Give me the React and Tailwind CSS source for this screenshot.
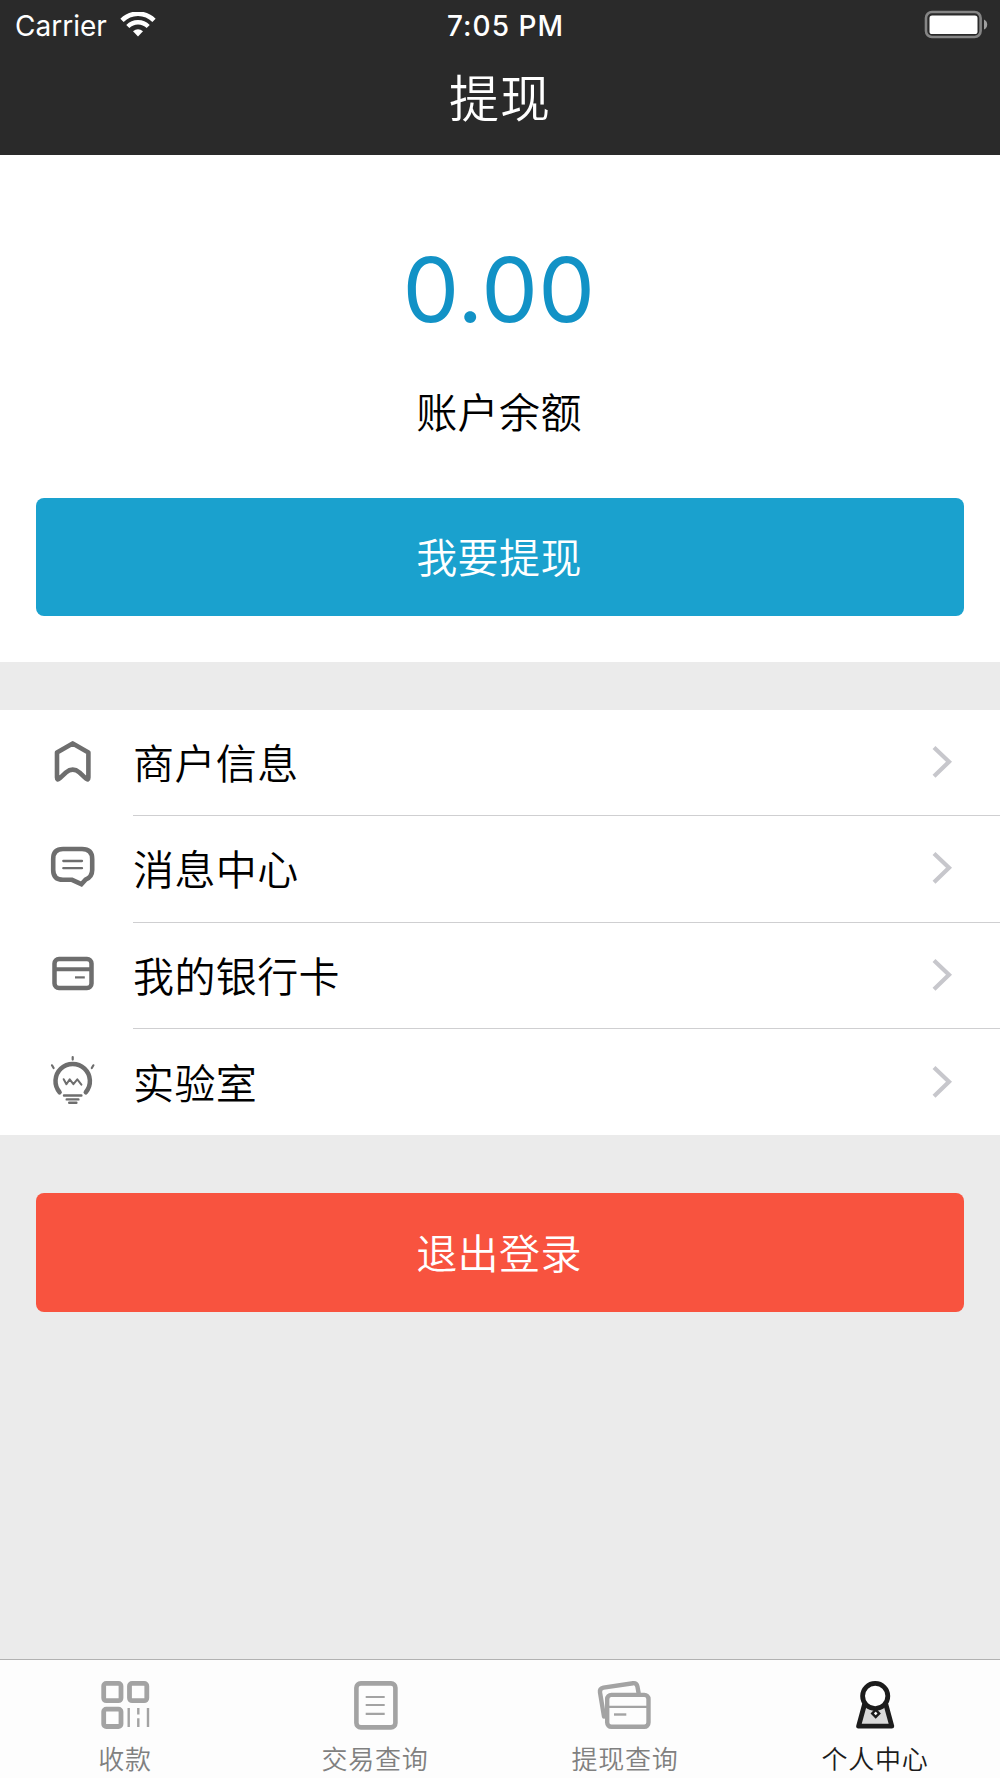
import React from "react";

function StatusBar() {
  return (
    <div className="grid h-[50px] grid-cols-3 items-center font-['Inter',sans-serif] text-[28px] leading-none text-white">
      <div className="flex items-center pl-[15px] pt-px">
        <span className="tracking-[0px]">Carrier</span>
        <svg className="ml-[13px] -mt-[1px]" width="36" height="26" viewBox="0 0 36 26" fill="none" stroke="#fff">
          <path d="M2 8.4A22.5 22.5 0 0 1 34 8.4" strokeWidth="4.6" />
          <path d="M7.8 14.5A14.5 14.5 0 0 1 28.2 14.5" strokeWidth="4.4" />
          <path d="M13 19.3Q18 15.4 23 19.3L18 24.4Z" fill="#fff" stroke="none" />
        </svg>
      </div>
      <div className="pl-[11px] pt-px text-center font-medium tracking-[1px]">7:05 PM</div>
      <div className="flex justify-end pr-[12px]">
        <svg className="-mt-px" width="64" height="30" viewBox="0 0 64 30">
          <rect x="2" y="2" width="54.6" height="25" rx="6" fill="none" stroke="#858585" strokeWidth="2.6" />
          <rect x="5.5" y="5.5" width="48" height="18.5" rx="2.6" fill="#fff" />
          <path d="M60 9.5Q63.2 11 63.2 14.5T60 19.5Z" fill="#a0a0a0" />
        </svg>
      </div>
    </div>
  );
}

function ShopIcon() {
  return (
    <svg width="56" height="56" viewBox="0 0 56 56" fill="none" stroke="#6e6e6e" strokeWidth="4.6">
      <path d="M27.7 8.4L43.4 17.4V42.5Q43.4 45.6 41 43.6L34.5 37.5Q27.7 31.8 20.9 37.5L14.4 43.6Q12 45.6 12 42.5V17.4Z" strokeLinejoin="round" />
    </svg>
  );
}

function MessageIcon() {
  return (
    <svg width="56" height="56" viewBox="0 0 56 56" fill="none" stroke="#6e6e6e" strokeWidth="4.6">
      <path d="M18 8H37Q47.2 8 47.2 18V29Q47.2 36 40.5 38.6L36.4 43.2L27 38.8H18Q8.2 38.8 8.2 29V18Q8.2 8 18 8Z" />
      <path d="M18.3 20H37M18.3 27.2H37" strokeWidth="2.3" strokeLinecap="round" />
    </svg>
  );
}

function CardIcon() {
  return (
    <svg width="56" height="56" viewBox="0 0 56 56" fill="none" stroke="#6e6e6e" strokeWidth="4.5">
      <rect x="9.5" y="11" width="37" height="29" rx="4.5" />
      <path d="M9.5 21.2H46.5" strokeWidth="4" />
      <path d="M30 29.4H39.8" strokeWidth="2.2" />
    </svg>
  );
}

function BulbIcon() {
  return (
    <svg width="56" height="56" viewBox="0 0 56 56" fill="none" stroke="#6e6e6e" strokeLinecap="round">
      <path d="M14.6 38.3A17.2 17.2 0 1 1 40.8 38.3" strokeWidth="4.5" />
      <path d="M19 41.5H36.4M21.7 45.4H33.4M24.2 48.8H31.4" strokeWidth="2.4" />
      <path d="M27.7 3V5.6M7 11.3L8.6 14M48.4 11.3L46.8 14" strokeWidth="2.2" />
      <path d="M18.7 25.2L21.4 30.2L24.7 25.4L28.4 30.2L32.3 25.4L36.4 30.6" strokeWidth="2" strokeLinejoin="round" />
    </svg>
  );
}

const rows = [
  { label: "商户信息", Icon: ShopIcon },
  { label: "消息中心", Icon: MessageIcon },
  { label: "我的银行卡", Icon: CardIcon },
  { label: "实验室", Icon: BulbIcon },
];

function Row({ label, Icon, last }) {
  return (
    <div className="flex h-[106.3px] pl-[45px]">
      <div className="w-[88px] pt-[25px]">
        <Icon />
      </div>
      <div className={"flex flex-1 items-center justify-between pr-[47px] " + (last ? "" : "border-b border-[#cfcfd1]")}>
        <span className="pb-[3px] text-[41px] font-[350] leading-[50px] tracking-[0.4px] text-black">{label}</span>
        <svg className="-mt-px" width="22" height="36" viewBox="0 0 22 36" fill="none" stroke="#c7c7cc" strokeWidth="4.2">
          <path d="M3 3.4L18 17.8L3 32.2" />
        </svg>
      </div>
    </div>
  );
}

function CollectIcon() {
  return (
    <svg width="60" height="60" viewBox="0 0 60 60" fill="none" stroke="#a3a3a3" strokeWidth="4.8">
      <rect x="8.7" y="7.4" width="17.3" height="17.3" rx="2.6" />
      <rect x="34.5" y="7.4" width="17.3" height="17.3" rx="2.6" />
      <rect x="8.7" y="33.2" width="17.3" height="17.3" rx="2.6" />
      <path d="M33.7 32V51M43.3 32V38.5M43.3 42.3V51M53 32V51" strokeWidth="2.4" />
    </svg>
  );
}

function OrdersIcon() {
  return (
    <svg width="60" height="60" viewBox="0 0 60 60" fill="none" stroke="#a3a3a3" strokeWidth="4.6">
      <rect x="11.4" y="7.4" width="39" height="44" rx="4.4" />
      <path d="M20.7 21H39.7M20.7 29H39.7M20.7 37.8H39.7" strokeWidth="2.2" />
    </svg>
  );
}

function WithdrawalsIcon() {
  return (
    <svg width="60" height="60" viewBox="0 0 60 60" fill="none" stroke="#a3a3a3" strokeWidth="4.4">
      <path d="M9 40.5L5 16.4Q4.4 12.4 8.4 11.6L38 7.2Q41.6 6.8 42.4 10.4L43.6 17" strokeLinecap="round" />
      <rect x="12.2" y="18.9" width="41.3" height="31.9" rx="4.2" />
      <path d="M12 30.9H53.4" strokeWidth="2.4" />
      <path d="M19 38.5H31.3" strokeWidth="2.4" />
    </svg>
  );
}

function ProfileIcon() {
  return (
    <svg width="60" height="60" viewBox="0 0 60 60" fill="none" stroke="#1c1c1c" strokeWidth="4.8">
      <path d="M19.5 28.5L13.6 50.2H46.8L40.9 28.5Z" fill="#d9d9d9" strokeLinejoin="round" />
      <circle cx="30.2" cy="20" r="12.6" fill="#fff" />
      <path d="M30.7 33.8L34.2 37.4L30.7 41L27.2 37.4Z" fill="#fff" strokeWidth="2.4" />
    </svg>
  );
}

const tabs = [
  { label: "收款", Icon: CollectIcon },
  { label: "交易查询", Icon: OrdersIcon },
  { label: "提现查询", Icon: WithdrawalsIcon },
  { label: "个人中心", Icon: ProfileIcon, active: true },
];

export default function App() {
  return (
    <div
      lang="zh-CN"
      className="flex h-[1778px] w-[1000px] flex-col overflow-hidden bg-[#ebebeb] font-['Noto_Sans_CJK_SC',sans-serif]"
    >
      <header className="h-[155px] bg-[#2a2a2a]">
        <StatusBar />
        <h1 className="pt-[9px] text-center text-[50px] font-[350] leading-[72px] tracking-[1px] text-white">提现</h1>
      </header>

      <section className="flex h-[507px] flex-col items-center bg-white px-9">
        <div className="mt-[85px] pr-[2px] font-['Inter',sans-serif] text-[90px] leading-[100px] tracking-[0.3px] text-[#1292c6]">
          0.00
        </div>
        <div className="mt-[40px] pr-[2px] text-[41px] font-[350] leading-[60px] tracking-[0.4px] text-black">
          账户余额
        </div>
        <button className="mt-[58px] h-[118px] w-full rounded-[8px] bg-[#1aa1ce] pr-[2px] pb-[3px] text-[41px] font-[350] tracking-[0.4px] text-white">
          我要提现
        </button>
      </section>

      <nav className="mt-12 bg-white">
        {rows.map((row, i) => (
          <Row key={row.label} {...row} last={i === rows.length - 1} />
        ))}
      </nav>

      <div className="px-9 pt-[58px]">
        <button className="h-[119px] w-full rounded-[8px] bg-[#f8533f] pr-[2px] pb-[2px] text-[41px] font-[350] tracking-[0.4px] text-white">
          退出登录
        </button>
      </div>

      <footer className="mt-auto grid h-[119px] grid-cols-4 border-t border-[#b2b2b2] bg-[#fdfdfd]">
        {tabs.map(({ label, Icon, active }) => (
          <div key={label} className="flex flex-col items-center pt-4">
            <Icon />
            <span
              className={
                "mt-[3px] text-[26px] font-[350] leading-[38px] tracking-[0.7px] " +
                (active ? "text-[#1c1c1c]" : "text-[#808080]")
              }
            >
              {label}
            </span>
          </div>
        ))}
      </footer>
    </div>
  );
}
